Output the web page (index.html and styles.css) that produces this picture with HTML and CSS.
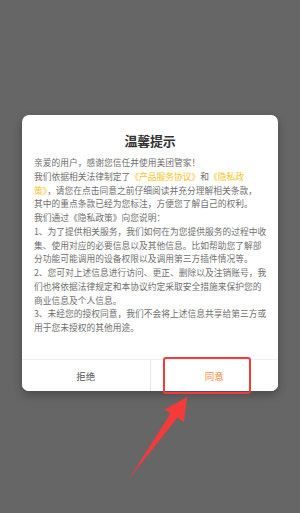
FILE: index.html
```html
<!DOCTYPE html>
<html lang="zh">
<head>
<meta charset="utf-8">
<link rel="stylesheet" href="styles.css">
</head>
<body>
<div class="screen">
  <div class="dialog">
    <h1 class="title">温馨提示</h1>
    <p class="content">亲爱的用户，感谢您信任并使用美团管家！<br>我们依据相关法律制定了<span class="link">《产品服务协议》</span>和<span class="link">《隐私政<br>策》</span>，请您在点击同意之前仔细阅读并充分理解相关条款，<br>其中的重点条款已经为您标注，方便您了解自己的权利。<br>我们通过《隐私政策》向您说明：<br>1、为了提供相关服务，我们如何在为您提供服务的过程中收<br>集、使用对应的必要信息以及其他信息。比如帮助您了解部<br>分功能可能调用的设备权限以及调用第三方插件情况等。<br>2、您可对上述信息进行访问、更正、删除以及注销账号，我<br>们也将依据法律规定和本协议约定采取安全措施来保护您的<br>商业信息及个人信息。<br>3、未经您的授权同意，我们不会将上述信息共享给第三方或<br>用于您未授权的其他用途。</p>
    <div class="actions">
      <button class="btn btn-reject">拒绝</button>
      <button class="btn btn-agree">同意</button>
    </div>
  </div>
  <div class="highlight"></div>
  <svg class="arrow" viewBox="0 0 300 513" width="300" height="513">
    <polygon points="129,479 170.5,413.5 164.5,409.5 187,397 184,422 177.5,417.5" fill="#f43a3a"/>
  </svg>
</div>
</body>
</html>
```
FILE: styles.css
```css
* { box-sizing: border-box; }
html, body { margin: 0; padding: 0; }
body {
  width: 300px;
  height: 513px;
  background: #666666;
  font-family: "Noto Sans CJK SC", "Noto Sans", sans-serif;
  overflow: hidden;
}
.screen {
  position: relative;
  width: 300px;
  height: 513px;
  padding: 115px 0 0 22px;
}
.dialog {
  width: 256px;
  height: 276px;
  background: #ffffff;
  border-radius: 7px;
  box-shadow: 0 4px 10px rgba(0, 0, 0, 0.28);
  display: flex;
  flex-direction: column;
  overflow: hidden;
}
.title {
  margin: 16px 0 0;
  font-size: 13px;
  line-height: 20px;
  font-weight: 700;
  color: #333333;
  text-align: center;
  letter-spacing: -0.3px;
}
.content {
  flex: 1;
  margin: 5px 0 0;
  padding: 0 0 0 12px;
  font-size: 8.75px;
  line-height: 13.75px;
  color: #6f6f6f;
  white-space: nowrap;
}
.link { color: #fcc419; }
.actions {
  height: 32px;
  display: flex;
  border-top: 1px solid #efefef;
}
.btn {
  flex: 1;
  border: 0;
  background: #ffffff;
  font-family: inherit;
  font-size: 9.5px;
  padding: 0;
  margin: 0;
}
.btn-reject {
  color: #555555;
  border-right: 1px solid #e6e6e6;
}
.btn-agree { color: #ff8b3d; }
.highlight {
  position: absolute;
  left: 163px;
  top: 357px;
  width: 88px;
  height: 37px;
  border: 2px solid #f43a3a;
  border-radius: 3px;
}
.arrow {
  position: absolute;
  left: 0;
  top: 0;
  pointer-events: none;
}
```
